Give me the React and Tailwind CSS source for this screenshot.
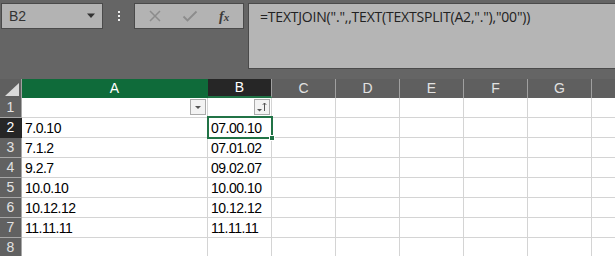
import React from 'react';

const cols = [
  { key: 'A', w: 'w-[186px]' },
  { key: 'B', w: 'w-[64px]' },
  { key: 'C', w: 'w-[64px]' },
  { key: 'D', w: 'w-[64px]' },
  { key: 'E', w: 'w-[64px]' },
  { key: 'F', w: 'w-[64px]' },
  { key: 'G', w: 'w-[64px]' },
  { key: 'H', w: 'w-[64px]' },
];

const data = [
  ['7.0.10', '07.00.10'],
  ['7.1.2', '07.01.02'],
  ['9.2.7', '09.02.07'],
  ['10.0.10', '10.00.10'],
  ['10.12.12', '10.12.12'],
  ['11.11.11', '11.11.11'],
];

const FilterBtn = ({ sorted }) => (
  <div className="w-[16px] h-[16px] bg-[#f3f3f3] border border-[#ababab] flex items-center justify-center">
    {sorted ? (
      <svg width="12" height="12" viewBox="0 0 12 12">
        <path d="M1 8h5l-2.5 2.5z" fill="#555" />
        <path d="M8.5 10V2M6.8 3.8L8.5 2l1.7 1.8" stroke="#555" strokeWidth="1" fill="none" />
      </svg>
    ) : (
      <svg width="10" height="10" viewBox="0 0 10 10">
        <path d="M2 4h6l-3 3z" fill="#555" />
      </svg>
    )}
  </div>
);

export default function App() {
  return (
    <div
      className="w-[615px] h-[256px] overflow-hidden bg-[#656565] flex flex-col"
      style={{ fontFamily: '"Liberation Sans", Arial, sans-serif' }}
    >
      {/* top bar */}
      <div className="h-[79px] shrink-0 flex items-start pt-[3px] pl-[1px]">
        <div className="w-[102px] shrink-0 h-[26px] bg-[#b3b3b3] border border-[#4a4a4a] flex items-center justify-between pl-[7px] pr-[6px]">
          <span className="text-[14px] text-[#333]">B2</span>
          <svg width="10" height="6" viewBox="0 0 10 6">
            <path d="M1 0.5h8L5 5z" fill="#333" />
          </svg>
        </div>
        <div className="w-[31px] shrink-0 h-[26px] flex flex-col items-center justify-center gap-[2px]">
          <div className="w-[2px] h-[2px] bg-[#eee]" />
          <div className="w-[2px] h-[2px] bg-[#eee]" />
          <div className="w-[2px] h-[2px] bg-[#eee]" />
        </div>
        <div className="w-[110px] shrink-0 h-[26px] bg-[#b3b3b3] border border-[#4a4a4a] flex items-center pl-[13px] gap-[20px]">
          <svg width="14" height="14" viewBox="0 0 14 14">
            <path d="M2 2l10 10M12 2L2 12" stroke="#8c8c8c" strokeWidth="1.5" />
          </svg>
          <svg width="16" height="14" viewBox="0 0 16 14">
            <path d="M1.5 7.5l4 4 9-9" stroke="#8c8c8c" strokeWidth="1.8" fill="none" />
          </svg>
          <span className="text-[14px] text-[#3a3a3a] italic font-bold ml-[1px]" style={{ fontFamily: '"Liberation Serif", serif' }}>
            f<span className="text-[11px]">x</span>
          </span>
        </div>
        <div className="w-[4px] shrink-0" />
        <div className="flex-1 h-[66px] bg-[#b5b5b5] border border-[#4a4a4a] border-r-0 pl-[11px] pt-[1px]">
          <span className="text-[14px] text-[#222] tracking-[-0.2px]" style={{ fontFamily: '"Open Sans", sans-serif' }}>
            =TEXTJOIN(".",,TEXT(TEXTSPLIT(A2,"."),"00"))
          </span>
        </div>
      </div>

      {/* column headers */}
      <div className="flex h-[19px] shrink-0 bg-[#5f5f5f]">
        <div className="w-[22px] shrink-0 h-full border-r border-[#a0a0a0] flex items-end justify-end pr-[2px] pb-[2px]">
          <svg width="14" height="13" viewBox="0 0 14 13">
            <path d="M14 0V13H0z" fill="#d9d9d9" />
          </svg>
        </div>
        {cols.map((c) => (
          <div
            key={c.key}
            className={`${c.w} shrink-0 h-full flex items-center justify-center text-[14px] border-r ${
              c.key === 'A'
                ? 'bg-[#0f6b3a] text-white border-[#0f6b3a]'
                : c.key === 'B'
                ? 'bg-[#262626] text-white border-[#a0a0a0] border-b-2 border-b-[#217346]'
                : 'text-[#e2e2e2] border-[#a0a0a0]'
            }`}
          >
            {c.key === 'H' ? '' : c.key}
          </div>
        ))}
      </div>

      {/* rows */}
      {[0, 1, 2, 3, 4, 5, 6, 7].map((r) => (
        <div key={r} className="flex h-[20px] shrink-0">
          <div
            className={`w-[22px] shrink-0 h-full flex items-center justify-center text-[14px] border-b border-r ${
              r === 1 ? 'bg-[#262626] text-white border-[#262626]' : 'bg-[#616161] text-[#e2e2e2] border-[#a7a7a7]'
            }`}
          >
            {r + 1}
          </div>
          {cols.map((c, ci) => {
            const val = r >= 1 && r <= 6 && ci < 2 ? data[r - 1][ci] : '';
            const sel = r === 1 && ci === 1;
            return (
              <div
                key={c.key}
                className={`${c.w} shrink-0 h-full bg-white border-r border-b border-[#d4d4d4] relative flex items-center pl-[3px] pt-[1px] text-[14px] tracking-[-0.5px] text-black`}
              >
                {val}
                {r === 0 && ci < 2 && (
                  <div className="absolute right-[1px] top-[1px]">
                    <FilterBtn sorted={ci === 1} />
                  </div>
                )}
                {sel && (
                  <>
                    <div className="absolute z-10 left-[-1px] top-[-2px] right-[-2px] bottom-[-2px] border-2 border-[#217346]" />
                    <div className="absolute z-20 right-[-4px] bottom-[-4px] w-[6px] h-[6px] bg-[#217346] border border-white" />
                  </>
                )}
              </div>
            );
          })}
        </div>
      ))}
    </div>
  );
}
